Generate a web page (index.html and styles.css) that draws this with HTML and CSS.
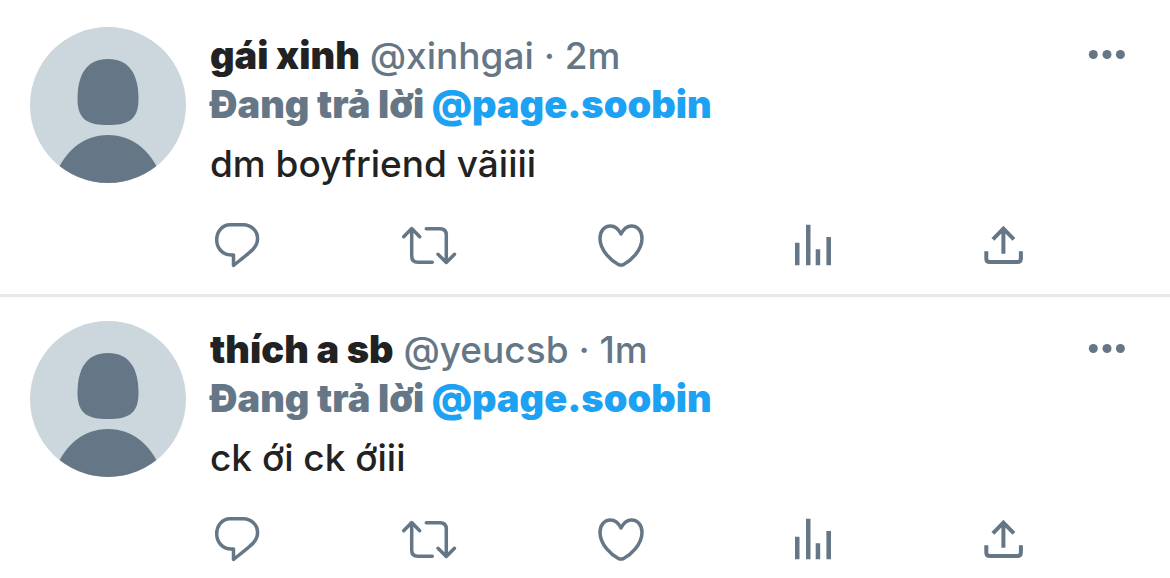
FILE: index.html
```html
<!DOCTYPE html>
<html lang="vi">
<head>
<meta charset="utf-8">
<meta name="viewport" content="width=device-width, initial-scale=1">
<title>Tweets</title>
<link rel="stylesheet" href="styles.css">
</head>
<body>
<svg class="sprite" aria-hidden="true">
  <symbol id="avatar" viewBox="0 0 156 156">
    <path d="M78 32C99 32 108.500 47 108.500 72C108.500 93 98 98 78 98S47.500 93 47.500 72C47.500 47 57 32 78 32Z"/>
    <path d="M20 165C29 127 51 108 78 108S127 127 136 165Z"/>
  </symbol>
  <symbol id="reply" viewBox="0 0 60 50">
    <path class="line" d="M23 4.800H36.500C44 4.800 50.600 11 50.600 18.600C50.600 24 47.500 28.500 43 32C38 36.500 32 41 26.500 45.500V35H24C15.500 35 9.700 28 9.700 20C9.700 11.500 15.500 4.800 23 4.800Z"/>
  </symbol>
  <symbol id="retweet" viewBox="0 0 60 50">
    <path class="line" d="M4.700 16.700L12.700 8.500L20.700 16.700M12.700 9V36Q12.700 42.300 19 42.300H33.300M27.300 8.700H41Q47.300 8.700 47.300 15V42M39 34.300L47.300 42.500L55.500 34.300"/>
  </symbol>
  <symbol id="like" viewBox="0 0 60 50">
    <path class="line" d="M30 14C27.500 9 24 6 19.500 6C13 6 9 11.500 9 18.500C9 31 21 41 27 44.200Q30 46 33 44.200C39 41 51 31 51 18.500C51 11.500 47 6 40.500 6C36 6 32.500 9 30 14Z"/>
  </symbol>
  <symbol id="stats" viewBox="0 0 60 50">
    <path d="M12 22.700H16.500V45.300H12ZM23 4.700H27.500V45.300H23ZM32.700 29.300H37.200V45.300H32.700ZM43.400 17H48V45.300H43.400Z"/>
  </symbol>
  <symbol id="share" viewBox="0 0 60 50">
    <path class="line line-square" d="M17.900 19.300L28.400 8.500L38.900 19.300M28.400 8V33.700M11.300 31.300V38.500Q11.300 42 15 42H42.200Q45.900 42 45.900 38.500V31.300"/>
  </symbol>
  <symbol id="more" viewBox="0 0 66 48">
    <circle cx="19.300" cy="22.500" r="4.500"/><circle cx="33" cy="22.500" r="4.500"/><circle cx="46.400" cy="22.500" r="4.500"/>
  </symbol>
</svg>
<main class="feed">
  <article class="tweet">
    <svg class="avatar" role="img" aria-label="gái xinh"><use href="#avatar"/></svg>
    <div class="content">
      <header class="head">
        <div class="byline"><strong class="name">gái xinh</strong> <span>@xinhgai</span> <span>·</span> <time>2m</time></div>
        <button class="more" type="button" aria-label="More"><svg class="more-icon"><use href="#more"/></svg></button>
      </header>
      <p class="context">Đang trả lời <a class="mention" href="#">@page.soobin</a></p>
      <p class="text">dm boyfriend vãiiii</p>
      <div class="actions">
        <button class="action" type="button" aria-label="Reply"><svg class="icon"><use href="#reply"/></svg></button>
        <button class="action" type="button" aria-label="Retweet"><svg class="icon"><use href="#retweet"/></svg></button>
        <button class="action" type="button" aria-label="Like"><svg class="icon"><use href="#like"/></svg></button>
        <button class="action" type="button" aria-label="Activity"><svg class="icon"><use href="#stats"/></svg></button>
        <button class="action" type="button" aria-label="Share"><svg class="icon"><use href="#share"/></svg></button>
      </div>
    </div>
  </article>
  <article class="tweet">
    <svg class="avatar" role="img" aria-label="thích a sb"><use href="#avatar"/></svg>
    <div class="content">
      <header class="head">
        <div class="byline"><strong class="name">thích a sb</strong> <span>@yeucsb</span> <span>·</span> <time>1m</time></div>
        <button class="more" type="button" aria-label="More"><svg class="more-icon"><use href="#more"/></svg></button>
      </header>
      <p class="context">Đang trả lời <a class="mention" href="#">@page.soobin</a></p>
      <p class="text">ck ới ck ớiii</p>
      <div class="actions">
        <button class="action" type="button" aria-label="Reply"><svg class="icon"><use href="#reply"/></svg></button>
        <button class="action" type="button" aria-label="Retweet"><svg class="icon"><use href="#retweet"/></svg></button>
        <button class="action" type="button" aria-label="Like"><svg class="icon"><use href="#like"/></svg></button>
        <button class="action" type="button" aria-label="Activity"><svg class="icon"><use href="#stats"/></svg></button>
        <button class="action" type="button" aria-label="Share"><svg class="icon"><use href="#share"/></svg></button>
      </div>
    </div>
  </article>
</main>
</body>
</html>
```
FILE: styles.css
```css
* { box-sizing: border-box; }

body {
  margin: 0;
  background: #fff;
  color: #657786;
  font-family: Inter, "Liberation Sans", sans-serif;
  font-size: 37px;
  font-weight: 500;
  line-height: 48px;
}

.sprite { display: none; }

.feed { padding-top: 3px; }

.tweet {
  display: flex;
  gap: 24px;
  padding: 24px 30px;
  border-bottom: 3px solid #e8e8e8;
}

.tweet:last-child {
  padding-bottom: 0;
  border-bottom: 0;
}

.avatar {
  flex: none;
  width: 156px;
  height: 156px;
  border-radius: 50%;
  background: #ccd6dd;
  fill: #657786;
}

.content {
  flex: 1;
  min-width: 0;
  padding-top: 4px;
}

.head {
  display: flex;
  justify-content: space-between;
}

.name,
.context {
  font-size: 38px;
  font-weight: 900;
}

.name { color: #222; }

.context { margin: 0; }

.mention {
  color: #1da1f2;
  text-decoration: none;
}

.text {
  margin: 12px 0 32px;
  color: #222;
}

.more,
.action {
  display: block;
  padding: 0;
  border: 0;
  background: none;
  color: inherit;
  cursor: pointer;
}

.more-icon {
  display: block;
  width: 66px;
  height: 48px;
  fill: currentColor;
}

.actions {
  display: flex;
  justify-content: space-between;
  margin-left: -3px;
  padding-right: 105px;
}

.icon {
  display: block;
  width: 60px;
  height: 50px;
  fill: currentColor;
}

.line {
  fill: none;
  stroke: currentColor;
  stroke-width: 3.5;
  stroke-linecap: round;
  stroke-linejoin: round;
}

.line-square {
  stroke-width: 4;
  stroke-linecap: butt;
  stroke-linejoin: miter;
}
```
